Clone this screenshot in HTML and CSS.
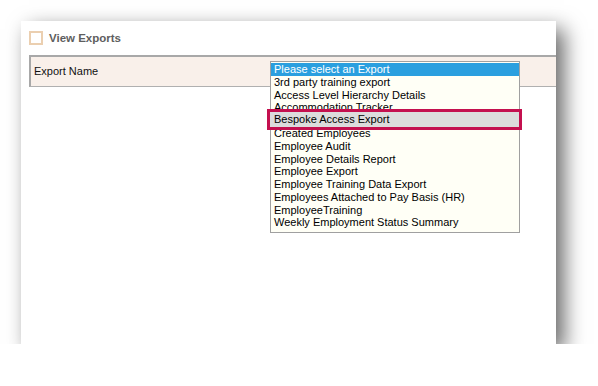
FILE: index.html
```html
<!DOCTYPE html>
<html lang="en">
<head>
    <meta charset="UTF-8">
    <title>View Exports</title>
    <link rel="stylesheet" href="styles.css">
</head>
<body>
    <div class="card">
        <div class="title">
            <span class="check"></span>
            <h1>View Exports</h1>
        </div>
        <div class="field-row">
            <label>Export Name</label>
            <!-- lista aberta do select -->
            <ul class="dropdown">
                <li class="selected">Please select an Export</li>
                <li>3rd party training export</li>
                <li>Access Level Hierarchy Details</li>
                <li>Accommodation Tracker</li>
                <li class="hover">Bespoke Access Export</li>
                <li>Created Employees</li>
                <li>Employee Audit</li>
                <li>Employee Details Report</li>
                <li>Employee Export</li>
                <li>Employee Training Data Export</li>
                <li>Employees Attached to Pay Basis (HR)</li>
                <li>EmployeeTraining</li>
                <li>Weekly Employment Status Summary</li>
            </ul>
        </div>
    </div>
</body>
</html>
```

FILE: styles.css
```css
* {
    margin: 0;
    padding: 0;
    box-sizing: border-box;
}

body {
    background-color: #ffffff;
    font-family: "Liberation Sans", Arial, sans-serif;
}

.card {
    margin: 21px 0 0 21px;
    width: 535px;
    height: 323px;
    background-color: #fff;
    box-shadow: 8px 8px 20px rgba(0, 0, 0, 0.6);
    padding: 10px 0 0 8px;
}

.title {
    display: flex;
    align-items: center;
    height: 14px;
}

.check {
    width: 14px;
    height: 14px;
    border: 2px solid #ebcfb0;
    margin-right: 6px;
}

.title h1 {
    font-size: 11.5px;
    font-weight: bold;
    color: #5e5e5e;
}

.field-row {
    position: relative;
    margin-top: 10px;
    height: 32px;
    background-color: #f9f0ea;
    border-top: 2px solid #a8a8a8;
    border-left: 2px solid #a8a8a8;
    border-bottom: 1px solid #b0b0b0;
    padding: 4px 0 0 3px;
}

.field-row label {
    font-size: 11px;
    color: #111;
}

.dropdown {
    position: absolute;
    left: 239px;
    top: 4px;
    width: 250px;
    height: 172px;
    list-style: none;
    background-color: #fffff6;
    border: 1px solid #a0a0a0;
    padding-top: 1px;
    z-index: 2;
}

.dropdown li {
    height: 12.75px;
    line-height: 12.75px;
    font-size: 11px;
    color: #000;
    padding-left: 3px;
    white-space: nowrap;
}

.dropdown li.selected {
    background-color: #2a9fdf;
    color: #fff;
}

.dropdown li.hover {
    position: relative;
    height: 21px;
    line-height: 15px;
    margin: -5px -3px -3px -4px;
    border: 3px solid #c4104f;
    background-color: #dcdcdc;
    padding-left: 4px;
}
```
